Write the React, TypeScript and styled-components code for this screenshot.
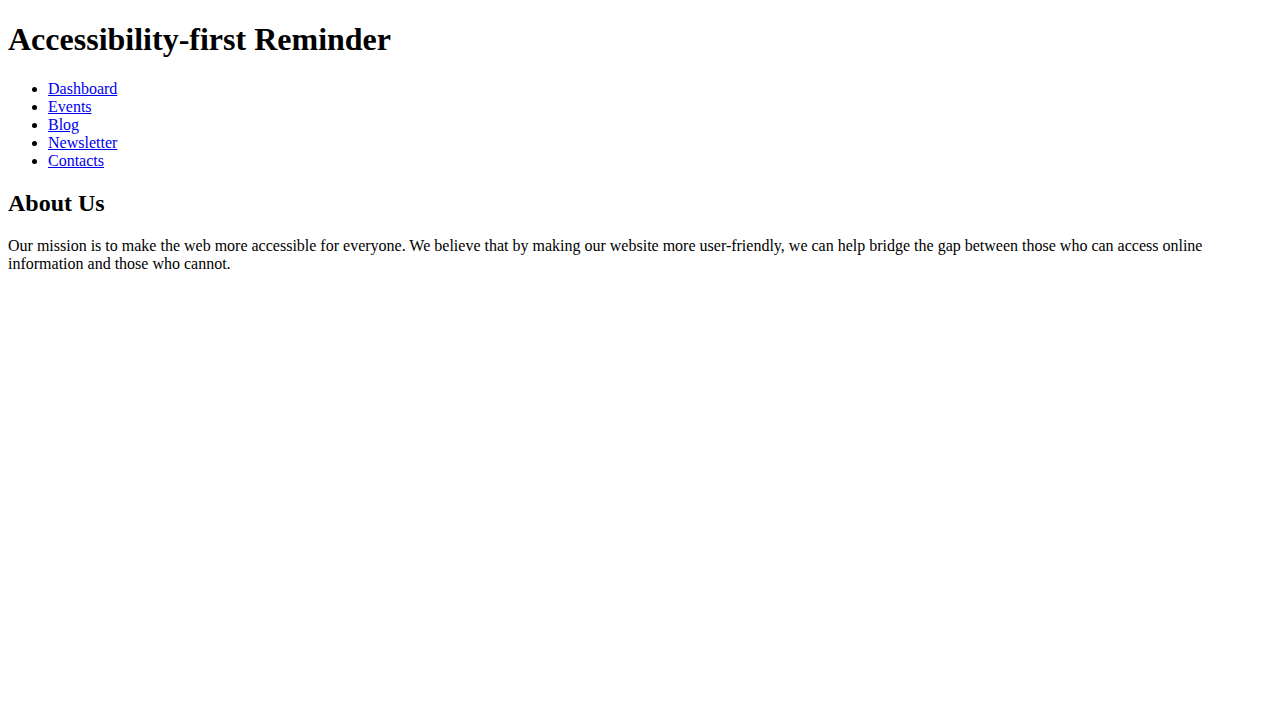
import React from "react";
import styled, { createGlobalStyle } from "styled-components";

const Global = createGlobalStyle`
  html, body {
    margin: 0;
    padding: 0;
    background: #ffffff;
  }
  body {
    margin: 0 8px 8px;
    font-family: "Liberation Serif", "Times New Roman", serif;
    font-size: 16px;
    color: #000000;
  }
`;

const Title = styled.h1`
  font-size: 32px;
  font-weight: bold;
  margin: 21.44px 0;
  line-height: normal;
  font-variant-ligatures: none;
`;

const NavList = styled.ul`
  margin: 16px 0;
  padding-left: 40px;
  list-style: disc;
`;

const NavItem = styled.li`
  line-height: normal;
`;

const NavLink = styled.a`
  color: #0000ee;
  text-decoration: underline;
`;

const SectionTitle = styled.h2`
  font-size: 24px;
  font-weight: bold;
  margin: 19.92px 0;
  line-height: normal;
`;

const Paragraph = styled.p`
  margin: 16px 0;
  line-height: normal;
`;

const links = ["Dashboard", "Events", "Blog", "Newsletter", "Contacts"];

export default function App() {
  return (
    <>
      <Global />
      <header>
        <Title>Accessibility-first Reminder</Title>
        <nav>
          <NavList>
            {links.map((l) => (
              <NavItem key={l}>
                <NavLink href="#">{l}</NavLink>
              </NavItem>
            ))}
          </NavList>
        </nav>
      </header>
      <main>
        <section>
          <SectionTitle>About Us</SectionTitle>
          <Paragraph>
            Our mission is to make the web more accessible for everyone. We believe that by making our website more user-friendly, we can help bridge the gap between those who can access online information and those who cannot.
          </Paragraph>
        </section>
      </main>
    </>
  );
}
